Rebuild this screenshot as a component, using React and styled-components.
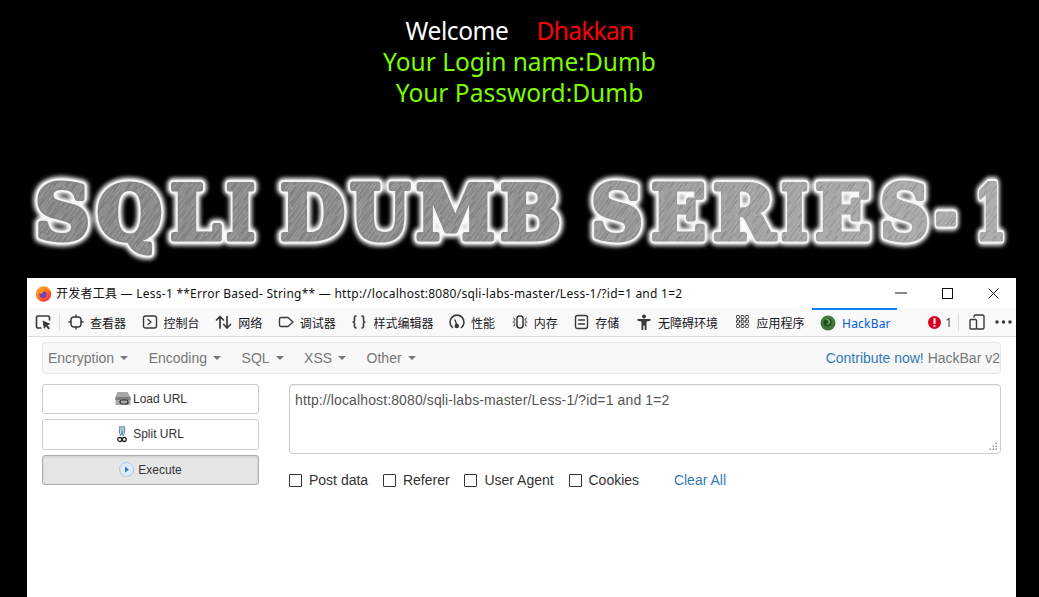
import React from "react";
import styled, { createGlobalStyle } from "styled-components";

const Global = createGlobalStyle`
  html, body { margin: 0; padding: 0; background: #000; height: 597px; overflow: hidden; }
  * { box-sizing: border-box; }
`;
const Page = styled.div`
  width: 1039px; height: 597px; overflow: hidden; background: #000;
  display: flex; flex-direction: column;
`;
const Greeting = styled.div`
  padding-top: 15px; height: 163px; width: 100%; text-align: center;
  font: 24.5px/31px "Noto Sans", sans-serif; color: #7cfc00; flex: none;
`;
const WelcomeLine = styled.div`
  color: #fff; display: flex; justify-content: center; gap: 28px; letter-spacing: -.4px;
`;
const Red = styled.span` color: #f00; letter-spacing: -.7px; `;
const LogoBox = styled.div` width: 1039px; height: 115px; flex: none; `;
const LogoSvg = styled.svg` display: block; `;
const Win = styled.div`
  width: 989px; flex: 1; background: #fff; margin-left: 27px;
  display: flex; flex-direction: column; font-family: "Noto Sans", "Noto Sans CJK SC", sans-serif;
`;
const TitleBar = styled.div`
  height: 30px; flex: none; display: flex; align-items: center; padding-left: 8px; color: #111; font-size: 12px;
`;
const TitleText = styled.span` margin-left: 4px; flex: 1; white-space: nowrap; letter-spacing: .25px; `;
const WinCtl = styled.div`
  width: 46px; height: 30px; display: flex; align-items: center; justify-content: center; flex: none;
`;
const Toolbar = styled.div`
  height: 29px; flex: none; background: #f9f9fa; border-bottom: 1px solid #dcdcde;
  display: flex; align-items: center; padding-left: 8px; color: #18181a; font-size: 12px;
  font-family: "Noto Sans CJK SC", "Noto Sans", sans-serif;
`;
const Sep = styled.i` width: 1px; height: 18px; background: #dedee0; flex: none; margin: ${p => p.$m}; `;
const Tool = styled.div`
  display: flex; align-items: center; gap: 6px; margin-right: ${p => 15.6 + (p.$extra || 0)}px; flex: none; white-space: nowrap;
`;
const Tab = styled.div`
  display: flex; align-items: center; gap: 6px; height: 28px; width: 85px; padding-left: 8px; margin-left: -8px; flex: none;
  color: #0060df; border-top: 2px solid #0a84ff; background: #f9f9fa; font-family: "Noto Sans", sans-serif; letter-spacing: .2px;
`;
const Spacer = styled.div` flex: 1; `;
const ErrCount = styled.div` display: flex; align-items: center; gap: 4px; color: #444; margin-right: 6px; font-family: "Noto Sans", sans-serif; `;
const Panel = styled.div`
  flex: 1; padding: 5px 15px 0; font-family: "Liberation Sans", sans-serif; font-size: 14px; color: #333;
`;
const Nav = styled.div`
  height: 32px; background: #f8f8f8; border: 1px solid #e7e7e7; border-radius: 4px; padding: 0 0 0 5px;
  display: flex; align-items: center; color: #777; gap: 20.5px; margin-bottom: 10px; white-space: nowrap;
`;
const NavItem = styled.span` display: flex; align-items: center; gap: 6px; `;
const Caret = styled.i`
  width: 0; height: 0; border-top: 4px solid #777; border-left: 4px solid transparent; border-right: 4px solid transparent;
`;
const Brand = styled.span` margin-left: auto; `;
const LinkText = styled.span` color: #337ab7; `;
const Columns = styled.div` display: grid; grid-template-columns: 217px 712px; gap: 30px; `;
const Buttons = styled.div` display: flex; flex-direction: column; `;
const Btn = styled.div`
  height: ${p => p.$h}px; margin-bottom: 5px; border: 1px solid ${p => p.$active ? "#adadad" : "#ccc"}; border-radius: 3px;
  background: ${p => p.$active ? "#e6e6e6" : "#fff"}; box-shadow: ${p => p.$active ? "inset 0 1px 3px rgba(0,0,0,.12)" : "none"};
  display: flex; align-items: center; justify-content: center; gap: ${p => p.$g}px; font-size: 12px; color: #333; padding-bottom: 1px;
`;
const Right = styled.div``;
const Area = styled.div`
  height: 70px; border: 1px solid #ccc; border-radius: 4px; padding: 5px 5px; line-height: 20px; color: #555; position: relative;
  box-shadow: inset 0 1px 1px rgba(0,0,0,.075); letter-spacing: .12px;
`;
const Grip = styled.svg` position: absolute; right: 2px; bottom: 2px; `;
const Options = styled.div` display: flex; align-items: center; height: 20px; margin-top: 16px; `;
const Box = styled.i` width: 13px; height: 13px; border: 1px solid #333; background: #fff; flex: none; margin-right: 7px; border-radius: 1px; `;
const OptLabel = styled.span` margin-right: 14.8px; `;
const Clear = styled(LinkText)` margin-left: 20px; `;

const Ic = ({ children, w = 16, h = 16, vb }) => (
  <svg width={w} height={h} viewBox={vb || `0 0 ${w} ${h}`} fill="none" stroke="#38383d" strokeWidth="1.4" strokeLinecap="round" strokeLinejoin="round" style={{ flex: "none" }}>{children}</svg>
);

const letters = [
  ["S", 35, 55], ["Q", 97, 65], ["L", 170, 51], ["I", 226, 29], [" ", 257, 20],
  ["D", 280, 65], ["U", 350, 60], ["M", 416, 79], ["B", 500, 61], [" ", 564, 24],
  ["S", 591, 52], ["E", 651, 55], ["R", 713, 62], ["I", 781, 27], ["E", 815, 56],
  ["S", 880, 49], ["-", 935, 22], ["1", 975, 31],
];

const Logo = () => (
  <LogoBox>
    <LogoSvg width="1039" height="115" viewBox="0 0 1039 115">
      <defs>
        <linearGradient id="metal" gradientUnits="userSpaceOnUse" x1="0" x2="1039" y1="0" y2="0">
          <stop offset="0" stopColor="#848484" />
          <stop offset=".5" stopColor="#8c8c8c" />
          <stop offset=".75" stopColor="#a2a2a2" />
          <stop offset="1" stopColor="#ababab" />
        </linearGradient>
        <pattern id="hatch" width="31" height="17" patternUnits="userSpaceOnUse" patternTransform="rotate(-54)">
          <path d="M0 2h31M0 5h14M9 8h22M0 10.500h31M18 13h13M0 15h20" stroke="#d0d0d0" strokeOpacity=".34" strokeWidth=".7" />
          <path d="M0 3.500h20M12 6.500h19M0 12h11M22 15.500h9" stroke="#555" strokeOpacity=".26" strokeWidth=".7" />
        </pattern>
        <filter id="soft" x="-5%" y="-30%" width="110%" height="160%"><feGaussianBlur stdDeviation="2.2" /></filter>
        <text id="word" y="75.500" fontFamily="'DejaVu Serif', serif" fontWeight="700" fontSize="75.500" strokeLinejoin="round" xmlSpace="preserve">
          {letters.map(([c, x, w], i) => (
            <tspan key={i} x={x} textLength={w} lengthAdjust="spacingAndGlyphs">{c}</tspan>
          ))}
        </text>
      </defs>
      <use href="#word" fill="#fff" stroke="#fff" strokeWidth="13" filter="url(#soft)" />
      <use href="#word" fill="#f4f4f4" stroke="#f4f4f4" strokeWidth="9" />
      <use href="#word" fill="url(#metal)" stroke="url(#metal)" strokeWidth="5" />
      <use href="#word" fill="url(#hatch)" stroke="url(#hatch)" strokeWidth="5" />
    </LogoSvg>
  </LogoBox>
);

const Firefox = () => (
  <svg width="17" height="17" viewBox="0 0 17 17" style={{ flex: "none" }}>
    <defs><linearGradient id="ff" x1="0" x2="1" y1="0" y2="1"><stop offset="0" stopColor="#ffcb2e" /><stop offset=".5" stopColor="#ff6a1f" /><stop offset="1" stopColor="#e8216a" /></linearGradient></defs>
    <circle cx="8.500" cy="9" r="7.800" fill="url(#ff)" />
    <path d="M11 1c2 1.500 4 3 5 6L12 4z" fill="#ffbd2e" />
    <circle cx="8" cy="9.500" r="3.600" fill="#7a3db8" />
    <path d="M4.500 8c1-2 4-3 6-2-2 0-3 1-3 2s-2 1-3 0z" fill="#ff9a2a" />
  </svg>
);

const tools = [
  ["查看器", <Ic><rect x="3" y="3" width="10" height="10" rx="3" /><path d="M8 1v2M8 13v2M1 8h2M13 8h2" /></Ic>],
  ["控制台", <Ic><rect x="1.500" y="2" width="13" height="12" rx="2" /><path d="M6 5.500 9 8l-3 2.500" /></Ic>],
  ["网络", <Ic w={17}><path d="M5 14V2.500M1.500 6 5 2.500 8.500 6M12 2.500V14M8.800 10.500 12 14l3.500-3.500" strokeWidth="1.700" /></Ic>],
  ["调试器", <Ic w={16}><path d="M3 3.500h7L15 8l-5 4.500H3A1.500 1.500 0 0 1 1.500 11V5A1.500 1.500 0 0 1 3 3.500z" /></Ic>],
  ["样式编辑器", <Ic><path d="M5 2C3 2 3.500 4 3.500 6S3 8 2 8c1 0 1.500 0 1.500 2S3 14 5 14M11 2c2 0 1.500 2 1.500 4s.5 2 1.500 2c-1 0-1.500 0-1.500 2s.5 4-1.500 4" strokeWidth="1.600" /></Ic>],
  ["性能", <Ic><path d="M3.500 13.500A7 7 0 1 1 12.500 13.500" strokeWidth="1.600" /><path d="M8 11.500 6 6" /><circle cx="7.800" cy="12" r="1.600" fill="#38383d" /></Ic>, 1],
  ["内存", <Ic><rect x="5" y="2" width="6" height="12" rx="2.500" strokeWidth="1.500" /><path d="M1.500 4 3 5M1 8h2M1.500 12 3 11M14.500 4 13 5M15 8h-2M14.500 12 13 11M2 6h1M2 10h1M13 6h1M13 10h1" strokeWidth="1" /></Ic>, 1],
  ["存储", <Ic w={15}><rect x="1.500" y="1.500" width="12" height="13" rx="2" /><path d="M4.500 6h6M4.500 10h6" /></Ic>, 1],
  ["无障碍环境", <svg width="16" height="16" viewBox="0 0 16 16" fill="#38383d" style={{ flex: "none" }}><circle cx="8" cy="2.500" r="2" /><path d="M1.500 5h13v1.800l-4 .8V16H8.700v-4.500H7.300V16H5.500V7.600l-4-.8z" /></svg>, 2],
  ["应用程序", <Ic w={15}>{[1.5, 6, 10.5].flatMap(x => [1.5, 6, 10.5].map(y => <rect key={`${x}${y}`} x={x} y={y} width="3" height="3" rx=".8" strokeWidth="1" />))}</Ic>],
];

export default function App() {
  return (
    <Page>
      <Global />
      <Greeting>
        <WelcomeLine><span>Welcome</span><Red>Dhakkan</Red></WelcomeLine>
        <div>Your Login name:Dumb</div>
        <div>Your Password:Dumb</div>
      </Greeting>
      <Logo />
      <Win>
        <TitleBar>
          <Firefox />
          <TitleText>开发者工具 — Less-1 **Error Based- String** — http://localhost:8080/sqli-labs-master/Less-1/?id=1 and 1=2</TitleText>
          <WinCtl><svg width="12" height="2"><path d="M0 1h12" stroke="#111" /></svg></WinCtl>
          <WinCtl><svg width="11" height="11"><rect x=".5" y=".5" width="10" height="10" fill="none" stroke="#111" /></svg></WinCtl>
          <WinCtl><svg width="11" height="11"><path d="M.5.5l10 10M10.500.5l-10 10" stroke="#111" /></svg></WinCtl>
        </TitleBar>
        <Toolbar>
          <Ic>
            <path d="M6 14H3a1.500 1.500 0 0 1-1.500-1.500v-9A1.500 1.500 0 0 1 3 2h10a1.500 1.500 0 0 1 1.500 1.500V6" strokeWidth="1.600" />
            <path d="M7.500 6.500 15.500 10l-3 1.200 2.500 3-1.500 1.300-2.500-3L9 15z" fill="#38383d" stroke="none" />
          </Ic>
          <Sep $m="0 8px 0 8px" />
          {tools.map(([t, icon, extra]) => <Tool key={t} $extra={extra}>{icon}<span>{t}</span></Tool>)}
          <Tab>
            <svg width="16" height="16" viewBox="0 0 16 16" style={{ flex: "none" }}>
              <circle cx="8" cy="8" r="7.500" fill="#3f7a3a" />
              <circle cx="7.500" cy="7.500" r="4" fill="#1f4a22" />
              <path d="M5 4c3-1 6 1 5 4-1 2-3 2-4 1 2 0 3-1 2-3-1-1-2-1-3-2z" fill="#6aa85f" />
            </svg>
            <span>HackBar</span>
          </Tab>
          <Spacer />
          <ErrCount>
            <svg width="13" height="13" viewBox="0 0 13 13"><circle cx="6.500" cy="6.500" r="6.500" fill="#d70022" /><path d="M6.500 3v4.200" stroke="#fff" strokeWidth="2" strokeLinecap="round" /><circle cx="6.500" cy="10" r="1.100" fill="#fff" /></svg>
            <span>1</span>
          </ErrCount>
          <Sep $m="0 10px 0 0" />
          <Ic w={16}><rect x="1" y="5.500" width="6.500" height="9.500" rx="1" /><path d="M5 3V2.500A1.500 1.500 0 0 1 6.500 1h7A1.500 1.500 0 0 1 15 2.500v11a1.500 1.500 0 0 1-1.500 1.500H8" /></Ic>
          <svg width="17" height="4" viewBox="0 0 17 4" style={{ margin: "0 4px 0 10px" }}><circle cx="2" cy="2" r="1.800" fill="#38383d" /><circle cx="8.500" cy="2" r="1.800" fill="#38383d" /><circle cx="15" cy="2" r="1.800" fill="#38383d" /></svg>
        </Toolbar>
        <Panel>
          <Nav>
            {["Encryption", "Encoding", "SQL", "XSS", "Other"].map(n => <NavItem key={n}>{n}<Caret /></NavItem>)}
            <Brand><LinkText>Contribute now!</LinkText> HackBar v2</Brand>
          </Nav>
          <Columns>
            <Buttons>
              <Btn $h={30} $g={1}>
                <svg width="18" height="15" viewBox="0 0 17 15">
                  <path d="M3 1h10l3 5v7a1 1 0 0 1-1 1H2a1 1 0 0 1-1-1V6z" fill="#a8a8a8" />
                  <path d="M1 6h15v3H1z" fill="#7d7d7d" />
                  <rect x="5.500" y="9" width="8" height="4" rx="2" fill="none" stroke="#333" strokeWidth="1.200" />
                </svg>
                Load URL
              </Btn>
              <Btn $h={31} $g={6}>
                <svg width="10" height="18" viewBox="0 0 10 18">
                  <path d="M3 1c-1 3-1 7 1 10M7 1c1 3 1 7-1 10M4 1c0 3 0 6 1 9M6 1c0 3 0 6-1 9" stroke="#4b7d97" fill="none" />
                  <circle cx="2.800" cy="14.500" r="2" fill="none" stroke="#222" strokeWidth="1.300" />
                  <circle cx="7.200" cy="14.500" r="2" fill="none" stroke="#222" strokeWidth="1.300" />
                </svg>
                Split URL
              </Btn>
              <Btn $h={30} $g={4} $active>
                <svg width="15" height="15" viewBox="0 0 15 15">
                  <circle cx="7.500" cy="7.500" r="7" fill="#dfeafa" stroke="#a9c4e6" />
                  <path d="M6 4.500 10 7.500 6 10.500z" fill="#3f78b8" />
                </svg>
                Execute
              </Btn>
            </Buttons>
            <Right>
              <Area>
                http://localhost:8080/sqli-labs-master/Less-1/?id=1 and 1=2
                <Grip width="9" height="9" viewBox="0 0 9 9" fill="#999">
                  <rect x="6.500" y="0.500" width="1.500" height="1.500" /><rect x="3.500" y="3.500" width="1.500" height="1.500" /><rect x="6.500" y="3.500" width="1.500" height="1.500" />
                  <rect x="0.500" y="6.500" width="1.500" height="1.500" /><rect x="3.500" y="6.500" width="1.500" height="1.500" /><rect x="6.500" y="6.500" width="1.500" height="1.500" />
                </Grip>
              </Area>
              <Options>
                {["Post data", "Referer", "User Agent", "Cookies"].map(o => (
                  <React.Fragment key={o}><Box /><OptLabel>{o}</OptLabel></React.Fragment>
                ))}
                <Clear>Clear All</Clear>
              </Options>
            </Right>
          </Columns>
        </Panel>
      </Win>
    </Page>
  );
}
